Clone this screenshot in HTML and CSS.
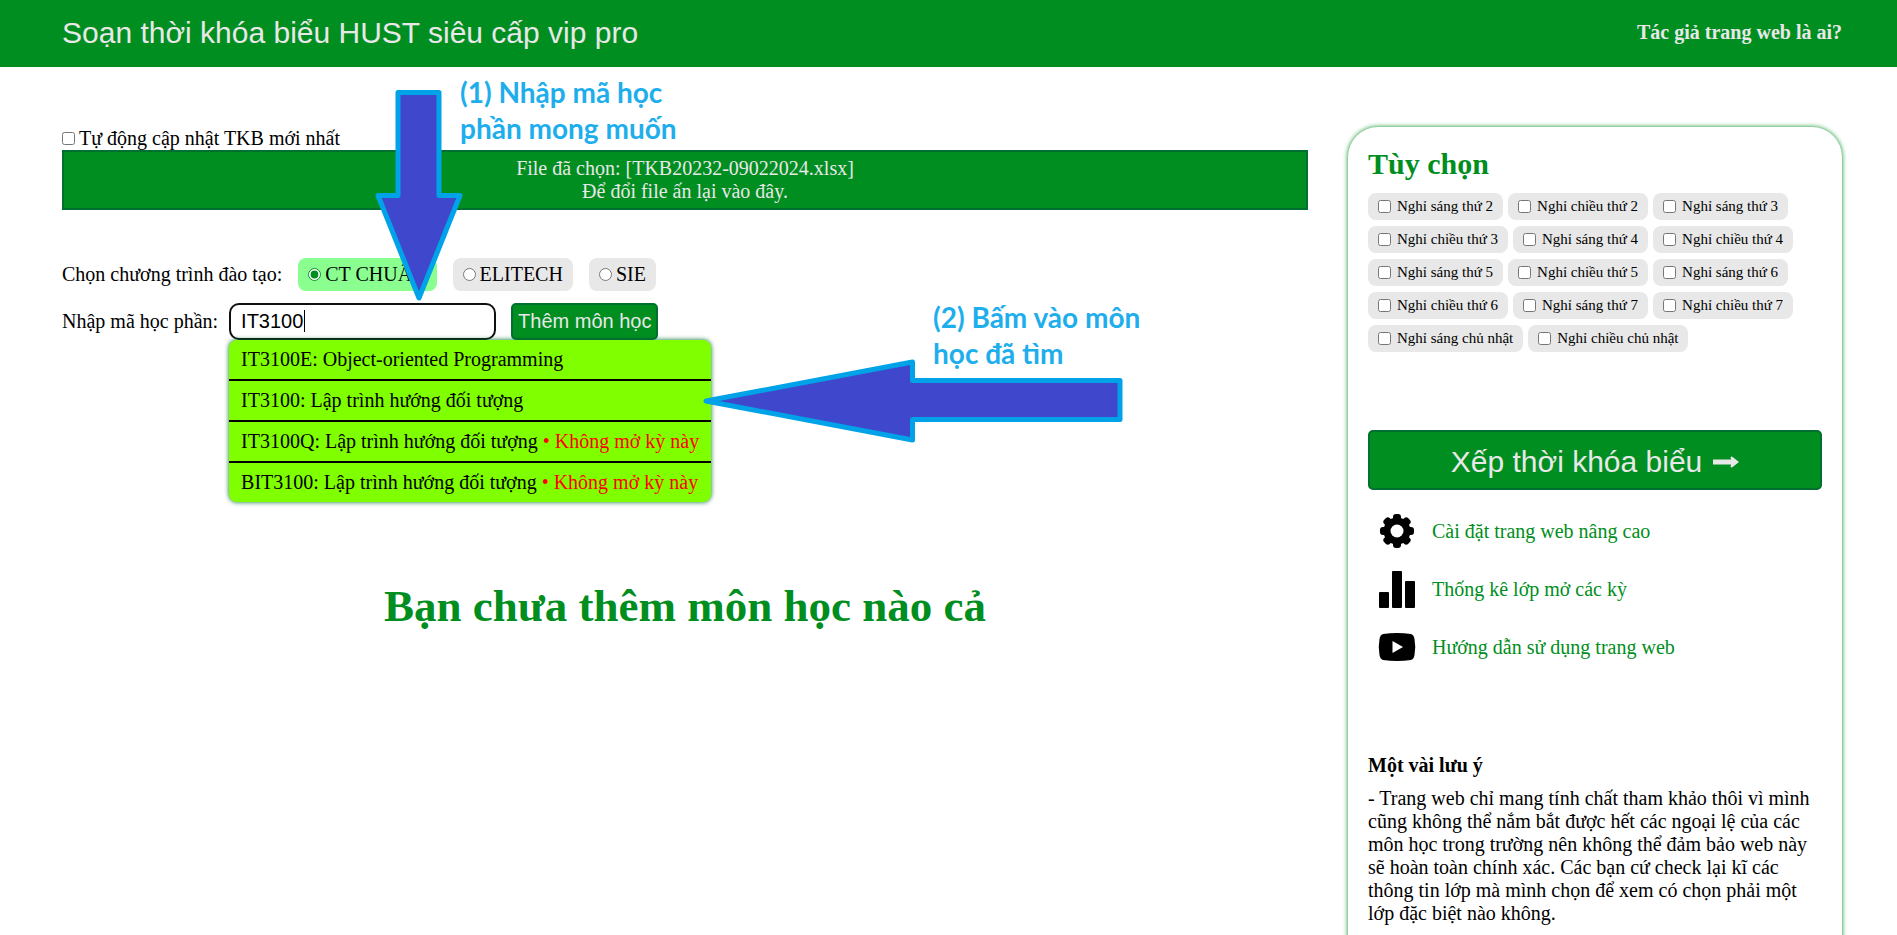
FILE: index.html
```html
<!DOCTYPE html>
<html lang="vi">
<head>
<meta charset="utf-8">
<title>Soạn thời khóa biểu HUST</title>
<link rel="stylesheet" href="styles.css">
</head>
<body>
<header class="topbar">
  <span class="topbar-title">Soạn thời khóa biểu HUST siêu cấp vip pro</span>
  <a class="topbar-link" href="#author">Tác giả trang web là ai?</a>
</header>

<main class="page">
  <section class="planner">
    <label class="auto-update"><input type="checkbox" class="tick">Tự động cập nhật TKB mới nhất</label>
    <button type="button" class="file-box">File đã chọn: [TKB20232-09022024.xlsx]<br>Để đổi file ấn lại vào đây.</button>

    <div class="program" role="radiogroup" aria-labelledby="program-label">
      <span id="program-label">Chọn chương trình đào tạo:</span>
      <label class="chip chip-on"><input type="radio" class="tick" name="program" checked>CT CHUẨN</label>
      <label class="chip"><input type="radio" class="tick" name="program">ELITECH</label>
      <label class="chip"><input type="radio" class="tick" name="program">SIE</label>
    </div>

    <div class="search">
      <label for="course">Nhập mã học phần:</label>
      <div class="field">
        <input id="course" class="field-input" type="text" value="IT3100" autocomplete="off">
        <span class="caret"></span>
        <ul class="suggestions">
          <li>IT3100E: Object-oriented Programming</li>
          <li>IT3100: Lập trình hướng đối tượng</li>
          <li>IT3100Q: Lập trình hướng đối tượng <span class="closed">• Không mở kỳ này</span></li>
          <li>BIT3100: Lập trình hướng đối tượng <span class="closed">• Không mở kỳ này</span></li>
        </ul>
      </div>
      <button type="button" class="btn add-btn">Thêm môn học</button>
    </div>

    <h1 class="empty">Bạn chưa thêm môn học nào cả</h1>
  </section>

  <aside class="sidebar">
    <h2 class="sidebar-title">Tùy chọn</h2>
    <div class="options">
      <label class="option"><input type="checkbox" class="tick">Nghỉ sáng thứ 2</label>
      <label class="option"><input type="checkbox" class="tick">Nghỉ chiều thứ 2</label>
      <label class="option"><input type="checkbox" class="tick">Nghỉ sáng thứ 3</label>
      <label class="option"><input type="checkbox" class="tick">Nghỉ chiều thứ 3</label>
      <label class="option"><input type="checkbox" class="tick">Nghỉ sáng thứ 4</label>
      <label class="option"><input type="checkbox" class="tick">Nghỉ chiều thứ 4</label>
      <label class="option"><input type="checkbox" class="tick">Nghỉ sáng thứ 5</label>
      <label class="option"><input type="checkbox" class="tick">Nghỉ chiều thứ 5</label>
      <label class="option"><input type="checkbox" class="tick">Nghỉ sáng thứ 6</label>
      <label class="option"><input type="checkbox" class="tick">Nghỉ chiều thứ 6</label>
      <label class="option"><input type="checkbox" class="tick">Nghỉ sáng thứ 7</label>
      <label class="option"><input type="checkbox" class="tick">Nghỉ chiều thứ 7</label>
      <label class="option"><input type="checkbox" class="tick">Nghỉ sáng chủ nhật</label>
      <label class="option"><input type="checkbox" class="tick">Nghỉ chiều chủ nhật</label>
    </div>

    <button type="button" class="btn build-btn">Xếp thời khóa biểu
      <svg class="build-arrow" viewBox="0 0 26 12" aria-hidden="true"><path d="M0 3.500h18L17.500 1 19 .5 26 6l-7 5.500-1.500-.5.5-2.500H0z"/></svg>
    </button>

    <nav class="links">
      <a class="link" href="#settings">
        <svg class="link-icon" viewBox="0 0 40 40" aria-hidden="true">
          <g><rect x="16" y="3" width="8" height="34" rx="3"/><rect x="16" y="3" width="8" height="34" rx="3" transform="rotate(45 20 20)"/><rect x="16" y="3" width="8" height="34" rx="3" transform="rotate(90 20 20)"/><rect x="16" y="3" width="8" height="34" rx="3" transform="rotate(135 20 20)"/><circle cx="20" cy="20" r="13.500"/></g>
          <circle cx="20" cy="20" r="6.500" fill="#fff"/>
        </svg>Cài đặt trang web nâng cao</a>
      <a class="link" href="#stats">
        <svg class="link-icon" viewBox="0 0 40 40" aria-hidden="true"><rect x="2" y="23" width="10" height="16" rx="1"/><rect x="15" y="2" width="10" height="37" rx="1"/><rect x="28" y="12" width="10" height="27" rx="1"/></svg>Thống kê lớp mở các kỳ</a>
      <a class="link" href="#guide">
        <svg class="link-icon" viewBox="0 0 40 40" aria-hidden="true"><path d="M6 7Q20 5 34 7 37 8 37.500 12 39 20 37.500 28 37 32 34 33 20 35 6 33 3 32 2.500 28 1 20 2.500 12 3 8 6 7z"/><path d="M15.500 14v12L26 20z" fill="#fff"/></svg>Hướng dẫn sử dụng trang web</a>
    </nav>

    <h3 class="notes-title">Một vài lưu ý</h3>
    <p class="notes-text">- Trang web chỉ mang tính chất tham khảo thôi vì mình cũng không thể nắm bắt được hết các ngoại lệ của các môn học trong trường nên không thể đảm bảo web này sẽ hoàn toàn chính xác. Các bạn cứ check lại kĩ các thông tin lớp mà mình chọn để xem có chọn phải một lớp đặc biệt nào không.</p>
  </aside>
</main>

<svg class="arrow arrow-down" viewBox="0 0 90 216" aria-hidden="true"><path d="M24 4.500H65V107.500H86L45 210 4 107.500H24z"/></svg>
<p class="hint hint-code">(1) Nhập mã học<br>phần mong muốn</p>
<svg class="arrow arrow-left" viewBox="0 0 424 86" aria-hidden="true"><path d="M4 43L210.500 4V22.500H418V61.500H210.500V82z"/></svg>
<p class="hint hint-pick">(2) Bấm vào môn<br>học đã tìm</p>
</body>
</html>
```

FILE: styles.css
```css
:root {
  --green: #008e20;
  --green-dark: #007030;
  --light: #e8e8e8;
}

* { box-sizing: border-box; }

html { scrollbar-width: none; }

body {
  position: relative;
  margin: 0;
  background: #fff;
  color: #000;
  font: 20px/23px "Liberation Serif", "Times New Roman", serif;
}

.topbar {
  display: flex;
  align-items: center;
  justify-content: space-between;
  height: 67px;
  padding: 0 55px 2px 62px;
  background: var(--green);
  color: var(--light);
}

.topbar-title {
  font: 30px/34px "Liberation Sans", Arial, sans-serif;
}

.topbar-link {
  color: inherit;
  font-weight: bold;
  text-decoration: none;
}

.page {
  display: grid;
  grid-template-columns: 70% minmax(0, 1fr);
  column-gap: 40px;
  padding: 60px 55px 0 62px;
}

.tick {
  flex: none;
  width: 13px;
  height: 13px;
  margin: 0;
  accent-color: var(--green);
}

.auto-update {
  display: flex;
  align-items: center;
  gap: 4px;
}

.file-box {
  display: block;
  width: 100%;
  padding: 5px;
  border: 2px solid var(--green-dark);
  background: var(--green);
  color: var(--light);
  font: inherit;
}

.program {
  display: flex;
  align-items: center;
  gap: 16px;
  margin-top: 48px;
}

.chip {
  display: flex;
  align-items: center;
  gap: 4px;
  padding: 5px 10px;
  border-radius: 8px;
  background: var(--light);
}

.chip-on { background: #8aff90; }

.search {
  display: flex;
  align-items: center;
  margin-top: 12px;
}

.field {
  position: relative;
  margin: 0 15px 0 11px;
}

.field-input {
  display: block;
  width: 267px;
  height: 37px;
  padding: 0 10px;
  border: 2px solid #101010;
  border-radius: 10px;
  background: #fff;
  color: #000;
  font: 20px/23px "Liberation Sans", Arial, sans-serif;
}

.caret {
  position: absolute;
  top: 7px;
  left: 75px;
  width: 1px;
  height: 22px;
  background: #000;
}

.suggestions {
  position: absolute;
  top: 100%;
  left: 0;
  margin: 0;
  padding: 0;
  border-radius: 8px;
  background: #80ff00;
  box-shadow: 0 0 5px var(--green-dark);
  list-style: none;
  white-space: nowrap;
}

.suggestions li { padding: 8px 12px; }

.suggestions li + li { border-top: 2px solid #000; }

.closed { color: #f00; }

.btn {
  border: 2px solid var(--green-dark);
  border-radius: 5px;
  background: var(--green);
  color: var(--light);
  font-family: "Liberation Sans", Arial, sans-serif;
}

.add-btn {
  height: 37px;
  padding: 0 5px;
  font-size: 20px;
}

.empty {
  margin: 240px 0 0;
  color: var(--green);
  font-size: 45px;
  line-height: 52px;
  text-align: center;
}

.sidebar {
  padding: 20px 20px 60px;
  border-radius: 30px;
  box-shadow: 0 0 5px var(--green);
}

.sidebar-title {
  margin: 0 0 12px;
  color: var(--green);
  font-size: 30px;
  line-height: 34px;
}

.options {
  display: flex;
  flex-wrap: wrap;
  gap: 6px 5px;
}

.option {
  display: flex;
  align-items: center;
  gap: 6px;
  padding: 5px 10px;
  border-radius: 8px;
  background: var(--light);
  font-size: 15px;
  line-height: 17px;
}

.build-btn {
  display: flex;
  align-items: center;
  justify-content: center;
  gap: 11px;
  width: 100%;
  height: 60px;
  margin-top: 78px;
  padding: 3px 6px 0;
  font-size: 30px;
}

.build-arrow {
  width: 26px;
  height: 12px;
  fill: currentColor;
}

.links {
  display: grid;
  margin-top: 12px;
}

.link {
  display: flex;
  align-items: center;
  gap: 15px;
  height: 58px;
  padding-left: 9px;
  color: var(--green);
  text-decoration: none;
}

.link-icon {
  width: 40px;
  height: 40px;
  fill: #000;
}

.notes-title {
  margin: 78px 0 10px;
  font-size: 20px;
}

.notes-text { margin: 0; }

/* Tutorial arrows and captions drawn over the page */
.arrow {
  position: absolute;
  fill: #3f48cc;
  stroke: #00a2e8;
  stroke-width: 5px;
  stroke-linejoin: round;
  pointer-events: none;
}

.arrow-down {
  top: 88px;
  left: 374px;
  width: 90px;
  height: 216px;
}

.arrow-left {
  top: 358px;
  left: 702px;
  width: 424px;
  height: 86px;
}

.hint {
  position: absolute;
  margin: 0;
  color: #1eaeec;
  font: bold 28px/36px Lato, "Open Sans", sans-serif;
}

.hint-code {
  top: 74px;
  left: 460px;
}

.hint-pick {
  top: 299px;
  left: 933px;
}
```
